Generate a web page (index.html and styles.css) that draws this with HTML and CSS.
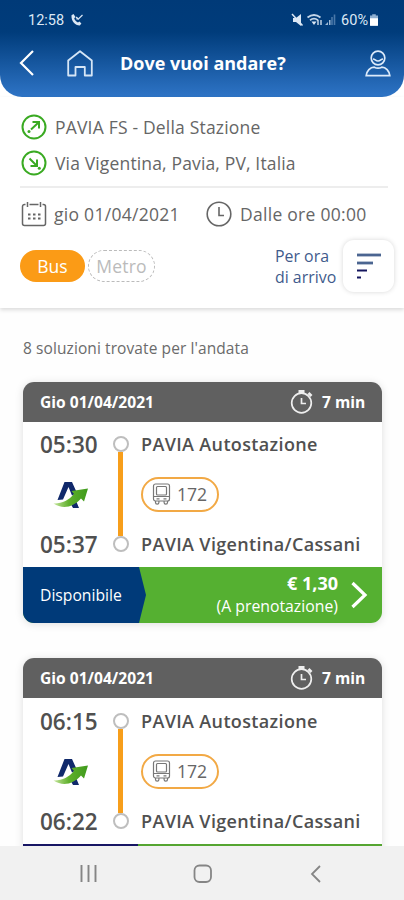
FILE: index.html
```html
<!DOCTYPE html>
<html lang="it">
<head>
<meta charset="utf-8">
<title>Dove vuoi andare?</title>
<link rel="stylesheet" href="styles.css">
</head>
<body>
<svg width="0" height="0" class="defs">
  <defs>
    <linearGradient id="tail" x1="0" x2="1"><stop offset="0" stop-color="#c5e59b"/><stop offset=".45" stop-color="#5fb02c"/><stop offset="1" stop-color="#3f9a1c"/></linearGradient>
    <symbol id="stopwatch" viewBox="0 0 24 26"><g fill="none" stroke="#eee" stroke-width="1.7"><circle cx="11.5" cy="14" r="9.8"/><path d="M11.5 9v5.500h4.500"/><path d="M8.500 2.600h6" stroke-width="3"/><path d="M18.500 4l3 3" stroke-width="2.600"/></g></symbol>
    <symbol id="bus" viewBox="0 0 18 22"><g fill="none" stroke="#777" stroke-width="1.200"><rect x="1" y="1" width="16" height="17" rx="2"/><rect x="4" y="3.500" width="10" height="8.500" rx="1"/><path d="M5 3.500h8M1 13.500h16M4 15.800h3M11 15.800h3"/><path d="M3 18v1.500a1.700 1.700 0 0 0 3.400 0V18M11.600 18v1.500a1.700 1.700 0 0 0 3.400 0V18"/></g></symbol>
    <symbol id="logo" viewBox="0 0 36 28"><path d="M4.500 19L11.500 1h7.500L24 12l-5 2.500-3.500-8.500L10 18.500zM17 21.500l5.500-3 3.500 8.500h-6z" fill="#10296b"/><path d="M.5 22.500c8 .5 15.500-3.500 20.500-9.500L18.500 10 35 7.500 31 20.500 28 17.500C20 26.500 9.500 28.500 .5 22.500z" fill="url(#tail)"/></symbol>
  </defs>
</svg>
<div class="app">
  <header class="top">
    <div class="status">
      <span class="clock">12:58</span>
      <svg class="call" width="14" height="14" viewBox="0 0 14 14"><path d="M1.500 2.200L3.500 1l2 3-1.300 1.200c.6 2 2 3.400 3.800 4.200l1.400-1 2 2.200-1.600 1.900C5 12.500 1 8 1.500 2.200z" fill="#dce8f5"/><path d="M6 4l2.200 2.200L12.500 2M9 6h-2V4" fill="none" stroke="#dce8f5" stroke-width="1.200"/></svg>
      <svg class="signals" width="46" height="14" viewBox="0 0 46 14"><path d="M2 5h3l5-4v12L5 9H2z" fill="#dce8f5"/><path d="M1 1l10.500 11.500" stroke="#dce8f5" stroke-width="1.500"/><g fill="none" stroke="#c3d5e8" stroke-width="1.800"><path d="M16.500 4.500q6.500-5 13 0M19 7.200q4-3 8 0"/></g><path d="M20.500 8.500h5L23 12z" fill="#dce8f5"/><path d="M27 7v5M30 7v5" stroke="#dce8f5" stroke-width="1.300"/><path d="M34 12h3V9zM38 12V7h1.500v5" fill="#9db9d6"/><path d="M41 12V4M43.500 12V1.500" stroke="#4a78a9" stroke-width="1.600"/></svg>
      <span class="pct">60%</span>
      <svg width="8" height="12" viewBox="0 0 9 13"><path d="M2.500 0h4v1.500H9V13H0V1.500h2.500z" fill="#8fb0d2"/><path d="M0 4.500h9V12a1 1 0 0 1-1 1H1a1 1 0 0 1-1-1z" fill="#fff"/></svg>
    </div>
    <div class="bar">
      <svg class="back" width="16" height="26" viewBox="0 0 16 26"><path d="M14 1L2 13l12 12" fill="none" stroke="#fff" stroke-width="2.200"/></svg>
      <svg class="home" width="26" height="27" viewBox="0 0 26 27"><path d="M1.200 10.500L13 1.300l11.800 9.200v15h-7v-8.500H8.500v8.500H1.200z" fill="none" stroke="#d6e6f6" stroke-width="1.800" stroke-linejoin="round"/></svg>
      <h1>Dove vuoi andare?</h1>
      <svg class="user" width="26" height="27" viewBox="0 0 26 27"><g fill="none" stroke="#dceafa" stroke-width="1.700"><circle cx="13" cy="8" r="6.800"/><path d="M8 9c2 0 2.500 2 5 2s3-2 5-2M1.200 25.700c.5-5 4-8.500 8-8.500q3.800 2 7.600 0c4 0 7.500 3.500 8 8.500z"/></g></svg>
    </div>
  </header>
  <section class="search">
    <div class="place"><svg width="26" height="26" viewBox="0 0 26 26"><g fill="none" stroke="#3aaa22" stroke-width="2"><circle cx="13" cy="13" r="11.500"/><path d="M10 15.500L17.500 8.500M11.500 8h6.500v6.500"/></g><circle cx="8" cy="17.500" r="1.500" fill="#3aaa22"/></svg><span class="p1">PAVIA FS - Della Stazione</span></div>
    <div class="place"><svg width="26" height="26" viewBox="0 0 26 26"><g fill="none" stroke="#3aaa22" stroke-width="2"><circle cx="13" cy="13" r="11.500"/><path d="M8.500 8.500l7 7M16 9.500v6.500H9.500"/></g><circle cx="18.300" cy="18.300" r="1.500" fill="#3aaa22"/></svg><span class="p2">Via Vigentina, Pavia, PV, Italia</span></div>
    <div class="when">
      <svg width="26" height="26" viewBox="0 0 26 26"><g fill="none" stroke="#666" stroke-width="1.500"><path d="M4.500 3.500h-1a2 2 0 0 0-2 2v17a2 2 0 0 0 2 2h19a2 2 0 0 0 2-2v-17a2 2 0 0 0-2-2h-1M8.500 3.500h9M6.500 1v5M19.500 1v5"/><path d="M7 13.500h12.500M7 17.500h12.500" stroke-width="2.200" stroke-dasharray="2.500 2.500"/></g></svg>
      <span class="date">gio 01/04/2021</span>
      <svg width="26" height="26" viewBox="0 0 26 26"><g fill="none" stroke="#666" stroke-width="1.600"><circle cx="13" cy="13" r="11.800"/><path d="M13 6v8.500h5"/></g></svg>
      <span class="hour">Dalle ore 00:00</span>
    </div>
    <div class="filters">
      <span class="chip on">Bus</span>
      <span class="chip off">Metro</span>
      <span class="sort">Per ora<br>di arrivo</span>
      <span class="sortbtn"><svg width="26" height="28" viewBox="0 0 26 28"><path d="M1 3h24" stroke="#4b6591" stroke-width="2.800"/><path d="M1 11h16" stroke="#4b6591" stroke-width="2.800"/><path d="M1 18.500h10M1 25.500h4" stroke="#15165e" stroke-width="2.200"/></svg></span>
    </div>
  </section>
  <main>
    <p class="found">8 soluzioni trovate per l'andata</p>
    <article class="card">
      <div class="head"><span class="day">Gio 01/04/2021</span><svg width="24" height="26"><use href="#stopwatch"/></svg><span class="dur">7 min</span></div>
      <div class="trip">
        <div class="times"><b>05:30</b><svg width="36" height="28"><use href="#logo"/></svg><b>05:37</b></div>
        <div class="track"><i></i><em></em><i></i></div>
        <div class="stops"><b class="from">PAVIA Autostazione</b><span class="line"><svg width="19" height="22"><use href="#bus"/></svg>172</span><b class="to">PAVIA Vigentina/Cassani</b></div>
      </div>
      <div class="foot"><span class="avail">Disponibile</span><div class="price"><b>€ 1,30</b><span>(A prenotazione)</span></div><svg width="18" height="28" viewBox="0 0 18 28"><path d="M2.500 2L15 14 2.500 26" fill="none" stroke="#fff" stroke-width="3.200"/></svg></div>
    </article>
    <article class="card">
      <div class="head"><span class="day">Gio 01/04/2021</span><svg width="24" height="26"><use href="#stopwatch"/></svg><span class="dur">7 min</span></div>
      <div class="trip">
        <div class="times"><b>06:15</b><svg width="36" height="28"><use href="#logo"/></svg><b>06:22</b></div>
        <div class="track"><i></i><em></em><i></i></div>
        <div class="stops"><b class="from">PAVIA Autostazione</b><span class="line"><svg width="19" height="22"><use href="#bus"/></svg>172</span><b class="to">PAVIA Vigentina/Cassani</b></div>
      </div>
      <div class="edge"></div>
    </article>
  </main>
  <nav>
    <svg width="18" height="18" viewBox="0 0 18 18"><path d="M1.500 0v17M8.500 0v17M15.500 0v17" stroke="#858585" stroke-width="1.900"/></svg>
    <svg class="homekey" width="20" height="20" viewBox="0 0 20 20"><rect x="1.500" y="1.500" width="16.500" height="16.500" rx="5" fill="none" stroke="#858585" stroke-width="1.800"/></svg>
    <svg width="12" height="18" viewBox="0 0 12 18"><path d="M10 1L2 9l8 8" fill="none" stroke="#858585" stroke-width="1.800"/></svg>
  </nav>
</div>
</body>
</html>
```
FILE: styles.css
```css
* { box-sizing: border-box; }
body { margin: 0; background: #fff; font-family: "Open Sans", sans-serif; }
svg { display: block; flex: none; }
.defs { position: absolute; }
span, b, h1 { white-space: nowrap; }
.app { width: 404px; height: 900px; display: flex; flex-direction: column; overflow: hidden; background: #fff; }

.top { height: 97px; flex: none; border-radius: 0 0 22px 22px; background: linear-gradient(#003a78 0, #003c7b 32px, #2e74c6 97px); color: #fff; }
.status { height: 38px; display: flex; align-items: center; padding: 2px 26px 0 28px; font: 400 14.500px Roboto, sans-serif; color: #dce8f5; }
.clock { width: 37px; }
.call { margin-left: 5px; }
.signals { margin-left: auto; }
.pct { margin: 0 2px 0 4px; }
.bar { height: 50px; display: flex; align-items: center; padding: 0 13px 0 19px; }
.home { margin-left: 32px; }
h1 { margin: 0 0 0 27px; font-size: 18px; font-weight: 700; line-height: 24px; }
.user { margin-left: auto; }

.search { position: relative; height: 211px; flex: none; background: #fff; padding: 12px 16px 0 20px; color: #666; font-size: 17.500px; box-shadow: 0 2px 4px rgba(0,0,0,.14); }
.place { height: 36px; display: flex; align-items: center; gap: 8px; padding-left: 1px; }
.p1 { letter-spacing: .19px; }
.p2 { letter-spacing: .15px; }
.when { height: 54px; margin-top: 5px; border-top: 2px solid #ededed; display: flex; align-items: center; padding-left: 1px; letter-spacing: .28px; }
.date { margin: 0 27px 0 7px; width: 125px; }
.hour { margin-left: 8px; }
.filters { height: 52px; display: flex; align-items: center; margin-right: -6px; }
.chip { height: 32px; border-radius: 16px; line-height: 32px; text-align: center; }
.on { width: 65px; background: #fb9b16; color: #fff; }
.off { width: 67px; margin-left: 3px; border: 1px dashed #bbb; line-height: 31px; color: #bbb; letter-spacing: .2px; }
.sort { margin-left: auto; width: 62px; padding-top: 1px; font-size: 15.900px; line-height: 21px; color: #3f5b8c; }
.sortbtn { margin-left: 6px; width: 51px; height: 52px; border-radius: 11px; display: flex; align-items: center; justify-content: center; box-shadow: 0 0 5px rgba(0,0,0,.16); }

main { flex: 1; min-height: 0; overflow: hidden; padding: 0 22px 0 23px; background: #fefefe; }
.found { margin: 28px 0 22px; font-size: 15.500px; letter-spacing: .09px; line-height: 24px; color: #6b6b6b; }
.card { margin-bottom: 35px; border-radius: 11px; background: #fff; box-shadow: 0 1px 8px rgba(0,0,0,.13); overflow: hidden; }
.card + .card .trip { height: 146px; padding-top: 8px; }
.head { height: 40px; background: #606060; color: #fff; display: flex; align-items: center; padding: 0 16px 0 17px; font-size: 15.600px; line-height: 20px; font-weight: 700; }
.day { margin-right: auto; }
.dur { margin-left: 8px; width: 44px; }
.trip { height: 145px; display: flex; padding: 7px 0 8px 17px; color: #505050; }
.times { width: 58px; padding-top: 1px; margin-bottom: -1px; display: flex; flex-direction: column; justify-content: space-between; }
.times b { font-size: 22.500px; line-height: 30px; font-weight: 600; }
.times svg { margin-left: 13px; }
.track { width: 17px; margin-left: 14px; display: flex; flex-direction: column; align-items: center; padding: 7px 0; }
.track i { width: 16px; height: 16px; border: 2px solid #bebebe; border-radius: 50%; }
.track em { flex: 1; width: 5px; background: #f79e1b; }
.stops { margin-left: 12px; display: flex; flex-direction: column; align-items: flex-start; justify-content: space-between; font-size: 17.600px; }
.stops b { line-height: 30px; font-weight: 600; font-size: 18px; letter-spacing: .35px; }
.line { height: 35px; width: 78px; border: 2px solid #f2a945; border-radius: 18px; display: flex; align-items: center; gap: 6px; padding-left: 9px; color: #666; }
.foot { height: 56px; display: flex; align-items: center; background: #55b031; color: #fff; padding-right: 14px; }
.avail { width: 123px; height: 56px; background: #003a79; clip-path: polygon(0 0, 116px 0, 100% 50%, 116px 100%, 0 100%); padding-left: 17px; line-height: 56px; font-size: 15.700px; }
.price { margin: 0 12px 0 auto; text-align: right; display: flex; flex-direction: column; line-height: 23px; font-size: 15.800px; }
.price b { font-size: 18px; }
.edge { height: 56px; background: linear-gradient(90deg, #171664 0 115px, #55a531 115px); }

nav { position: relative; height: 54px; flex: none; background: #f1f1f1; display: flex; align-items: center; justify-content: space-between; padding: 1px 82px 0 80px; }
.homekey { margin-right: 2px; }
```
